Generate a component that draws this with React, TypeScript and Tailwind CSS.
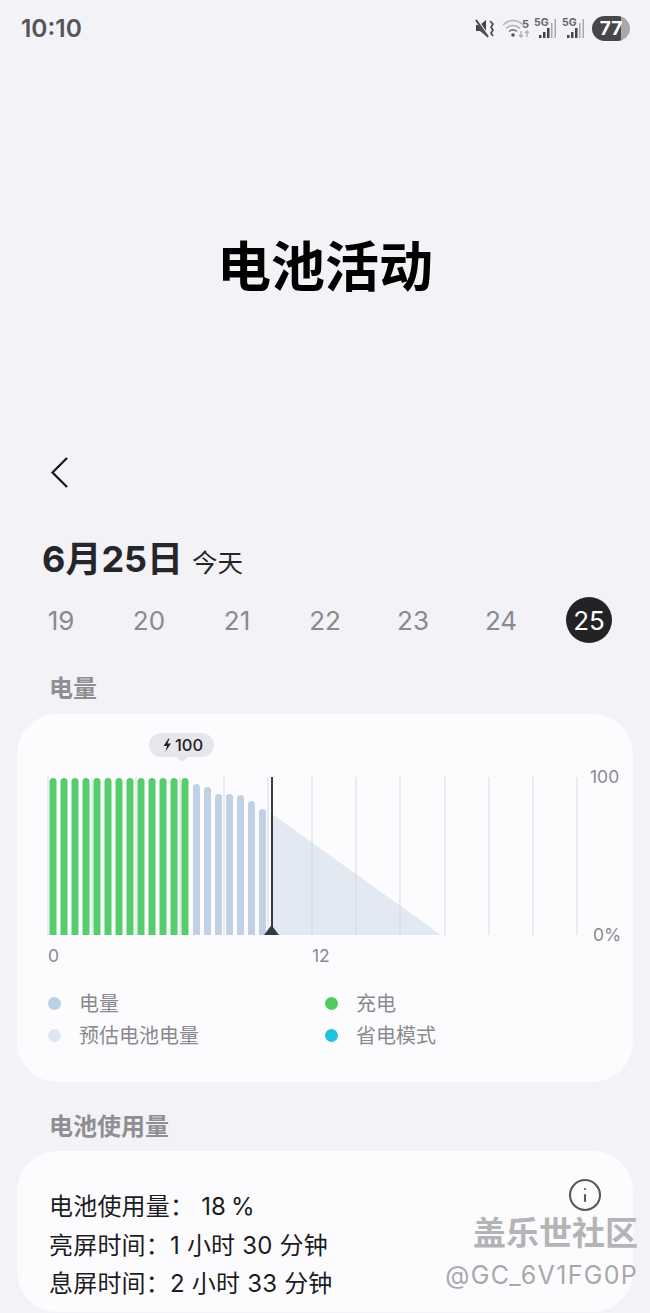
import { Info } from "lucide-react"

const greenBars = [49, 60, 71, 82, 93, 104, 115, 126, 137, 148, 159, 170, 181]
const blueBars = [
  { x: 193, top: 784 },
  { x: 204, top: 787 },
  { x: 215, top: 794 },
  { x: 226, top: 794 },
  { x: 237, top: 795 },
  { x: 248, top: 801 },
  { x: 259, top: 809 },
]
const gridLines = [48, 92, 136, 180, 224, 268, 312, 356, 400, 445, 489, 533, 577]
const days = ["19", "20", "21", "22", "23", "24"]

function SignalIcon() {
  return (
    <svg width="24" height="22" viewBox="0 0 24 22">
      <text x="0" y="9" fontSize="10.500" fontWeight="700" fill="#666" fontFamily="Inter, sans-serif">5G</text>
      <rect x="5" y="18" width="2.5" height="3" fill="#444" />
      <rect x="9" y="15" width="2.5" height="6" fill="#444" />
      <rect x="13" y="11" width="2.5" height="10" fill="#444" />
      <rect x="17" y="6" width="1.5" height="15" fill="#aaa" />
      <rect x="20.5" y="2" width="1.5" height="19" fill="#aaa" />
    </svg>
  )
}

function StatusBar() {
  return (
    <div className="flex h-[56px] shrink-0 items-center justify-between pl-[21px] pr-[20px]">
      <span className="text-[24.500px] font-semibold text-[#555558]">10:10</span>
      <div className="flex items-center">
        <svg width="20" height="20" viewBox="0 0 20 20" className="mr-[7px] ml-[2px]">
          <path d="M1 7h4l6-5v16l-6-5H1z" fill="#444" />
          <path d="M1 1l12 17" stroke="#f2f2f7" strokeWidth="3" />
          <path d="M1 2l12 17" stroke="#444" strokeWidth="2" />
          <path d="M15 3l3 3-2 3 2 3-2 3 2 3" fill="none" stroke="#444" strokeWidth="1.6" />
        </svg>
        <svg width="30" height="22" viewBox="0 0 30 22" className="mr-[2px]">
          <path d="M1 8c6-6 14-6 20 0" fill="none" stroke="#b5b5b8" strokeWidth="1.6" />
          <path d="M4 11.500c4-4 10-4 14 0" fill="none" stroke="#b5b5b8" strokeWidth="1.6" />
          <path d="M7 14.500c2.500-2 5.500-2 8 0" fill="none" stroke="#777" strokeWidth="1.6" />
          <circle cx="11" cy="18" r="1.800" fill="#555" />
          <text x="20" y="11" fontSize="11" fontWeight="700" fill="#666" fontFamily="Inter, sans-serif">5</text>
          <path d="M19 14v6M17 18l2 2 2-2" fill="none" stroke="#b5b5b8" strokeWidth="1.500" />
          <path d="M25 20v-6M23 16l2-2 2 2" fill="none" stroke="#b5b5b8" strokeWidth="1.500" />
        </svg>
        <div className="mr-[4px]"><SignalIcon /></div>
        <div className="mr-[6px]"><SignalIcon /></div>
        <div className="flex h-[25px] w-[38px] items-center justify-center rounded-full bg-[linear-gradient(90deg,#47474a_77%,#a9a9ac_77%)] text-[19px] leading-none font-bold text-white">
          77
        </div>
      </div>
    </div>
  )
}

function BatteryChart() {
  return (
    <svg width="616" height="240" viewBox="17 730 616 240" className="block">
      {gridLines.map((x) => (
        <rect key={x} x={x - 0.75} y="777" width="1.5" height="158" fill="#e4e5ea" />
      ))}
      <path d="M272 814L441 935H272z" fill="#c9d6e6" fillOpacity="0.5" />
      {greenBars.map((x) => (
        <path key={x} d={`M${x + 0.5} 935V781.500a3.500 3.500 0 0 1 7 0V935z`} fill="#55cd6c" />
      ))}
      {blueBars.map((b) => (
        <path key={b.x} d={`M${b.x} 935V${b.top + 3.5}a3.500 3.500 0 0 1 7 0V935z`} fill="#c0d0e5" />
      ))}
      <rect x="271" y="777" width="2" height="158" fill="#3a3a3e" />
      <path d="M264 935l7.500-10 7.500 10z" fill="#3a3a3e" />

      <rect x="149" y="733" width="65" height="24" rx="12" fill="#e7e7eb" />
      <path d="M176 757h12l-6 5z" fill="#e7e7eb" />
      <path d="M168.500 738.500l-5 7.500h3.500l-1.500 5.500 5.500-8h-3.500l2-5z" fill="#222" />
      <text x="175" y="751" fontSize="16.500" fontWeight="500" fill="#222" fontFamily="Inter, sans-serif">100</text>

      <g fontSize="17.500" fill="#8a8a8e" fontFamily="Inter, sans-serif">
        <text x="48" y="962">0</text>
        <text x="312" y="962">12</text>
        <text x="590" y="783">100</text>
        <text x="593" y="941">0%</text>
      </g>
    </svg>
  )
}

function LegendItem({ color, label }: { color: string; label: string }) {
  return (
    <div className="flex h-[32px] items-center">
      <span className={`h-[13px] w-[13px] rounded-full ${color}`} />
      <span className="ml-[18px] pt-[2px] text-[20px] leading-none text-[#8a8a8e]">{label}</span>
    </div>
  )
}

export default function App() {
  return (
    <div className="relative flex h-[1313px] w-[650px] flex-col overflow-hidden bg-[#f2f2f7] font-['Inter','Noto_Sans_CJK_SC',sans-serif]">
      <StatusBar />

      <div className="flex h-[387px] shrink-0 items-center justify-center pt-[37px]">
        <h1 className="text-[54px] leading-none font-bold text-black">电池活动</h1>
      </div>

      <div className="flex h-[58px] shrink-0 items-center pl-[50px]">
        <svg width="19" height="32" viewBox="0 0 19 32">
          <path d="M17 2L2.500 16.500 17 31" fill="none" stroke="#111" strokeWidth="2.200" />
        </svg>
      </div>

      <div className="mt-[35px] flex h-[46px] shrink-0 items-baseline pl-[42px]">
        <span className="text-[36px] leading-[46px] font-bold text-[#26262a]">6月25日</span>
        <span className="ml-[9px] text-[25.500px] text-[#26262a]">今天</span>
      </div>

      <div className="mt-[15px] flex h-[46px] shrink-0 items-center pl-[17px] text-[26px] text-[#8a8a8e]">
        {days.map((d) => (
          <span key={d} className="w-[88px] text-center">{d}</span>
        ))}
        <span className="ml-[21px] flex h-[46px] w-[46px] items-center justify-center rounded-full bg-[#232326] text-white">25</span>
      </div>

      <h2 className="mt-[31px] shrink-0 pl-[49px] text-[24px] leading-[30px] font-semibold text-[#8e8e93]">电量</h2>

      <section className="mx-[17px] mt-[10px] h-[368px] shrink-0 rounded-[40px] bg-[#fcfcfe] pt-[16px]">
        <BatteryChart />
        <div className="mt-[17px] grid grid-cols-[277px_1fr] pl-[31px]">
          <LegendItem color="bg-[#bcd0e3]" label="电量" />
          <LegendItem color="bg-[#4fcb63]" label="充电" />
          <LegendItem color="bg-[#e0e6ef]" label="预估电池电量" />
          <LegendItem color="bg-[#1fc3dd]" label="省电模式" />
        </div>
      </section>

      <h2 className="mt-[30px] shrink-0 pl-[49px] text-[24px] leading-[30px] font-semibold text-[#8e8e93]">电池使用量</h2>

      <section className="relative mx-[17px] mt-[9px] h-[161px] shrink-0 rounded-[40px] bg-[#fcfcfe] pt-[37px] pl-[32px] text-[24px] leading-[38.500px] tracking-[0.2px] text-[#1c1c1e]">
        <p>电池使用量： <span className="[word-spacing:-2px]">18 %</span></p>
        <p>亮屏时间：1 小时 30 分钟</p>
        <p>息屏时间：2 小时 33 分钟</p>
        <Info className="absolute top-[26px] right-[30px] h-[36px] w-[36px] text-[#58585b]" strokeWidth={1.4} />
      </section>

      <div className="absolute top-[1214px] right-[12px] flex flex-col items-end">
        <span className="text-[33px] leading-[38px] font-bold text-[#b4b4b6]">盖乐世社区</span>
        <span className="mt-[8px] text-[25px] leading-[30px] tracking-[1.300px] text-[#a8a8aa]">@GC_6V1FG0P</span>
      </div>
    </div>
  )
}
